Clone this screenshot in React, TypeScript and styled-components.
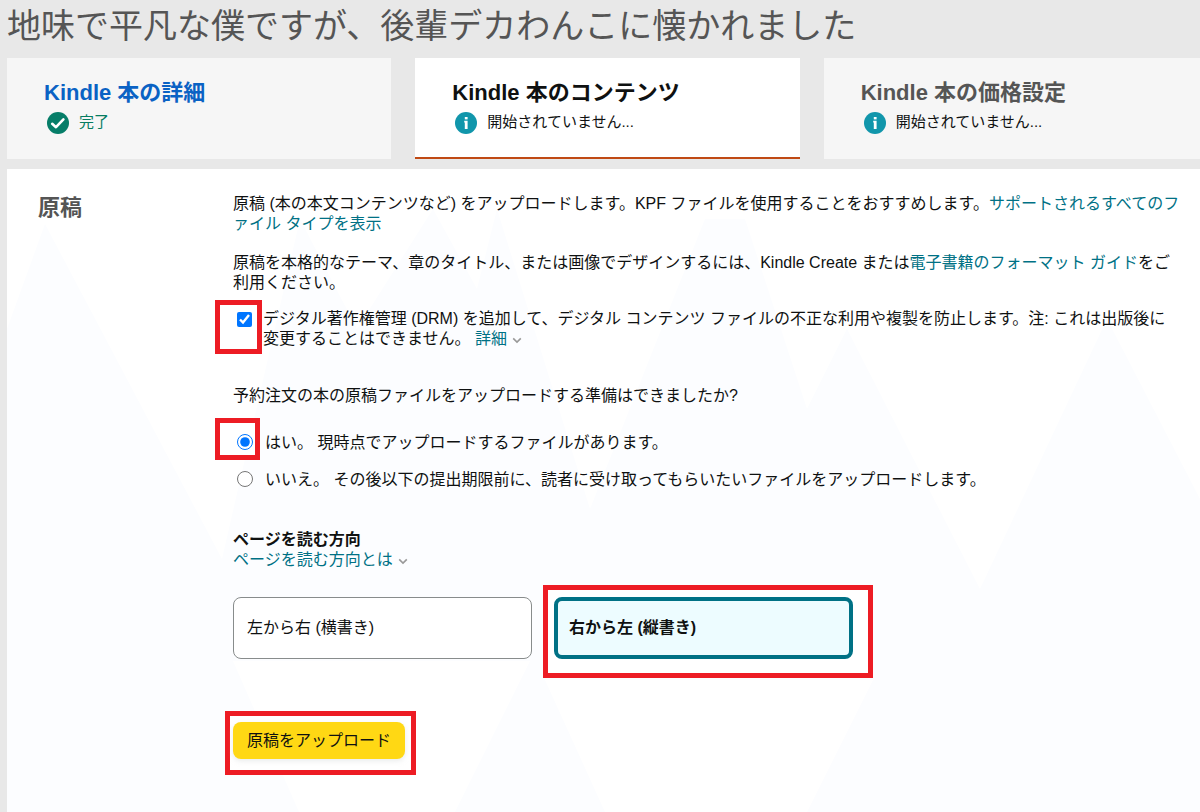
import React, { useState } from "react";
import styled, { createGlobalStyle, css } from "styled-components";

const GlobalStyle = createGlobalStyle`
  *, *::before, *::after { box-sizing: border-box; }
  body {
    margin: 0;
    background: #e8e8e8;
    color: #0f1111;
    font-family: "Liberation Sans", "Noto Sans CJK JP", sans-serif;
    font-size: 16px;
    line-height: 20px;
  }
  button, input { font: inherit; color: inherit; }
`;

const Page = styled.div`
  display: flex;
  flex-direction: column;
  min-height: 100vh;
  padding-left: 7px;
  overflow: hidden;
`;

const BookTitle = styled.h1`
  margin: 0;
  padding-bottom: 6px;
  font-size: 34px;
  font-weight: 400;
  line-height: 52px;
  color: #555;
`;

const Steps = styled.nav`
  display: grid;
  grid-template-columns: repeat(3, 1fr);
  gap: 24px;
  margin: 0 -8px 10px 0;
`;

type StepState = "done" | "current" | "next";

const stepColors: Record<StepState, string> = {
  done: "#0a62c4",
  current: "#0f1111",
  next: "#555",
};

const Step = styled.a<{ $state: StepState }>`
  display: flex;
  flex-direction: column;
  gap: 7px;
  min-height: 101px;
  padding: 23px 24px 16px 37px;
  background: ${(p) => (p.$state === "current" ? "#fff" : "#f6f6f6")};
  border-bottom: 2px solid ${(p) => (p.$state === "current" ? "#c04a14" : "#f6f6f6")};
  color: ${(p) => stepColors[p.$state]};
  text-decoration: none;
`;

const StepName = styled.span`
  font-size: 22px;
  font-weight: 700;
  line-height: 24px;
`;

const StepStatus = styled.span<{ $done: boolean }>`
  display: flex;
  align-items: flex-start;
  gap: 10px;
  padding-left: 3px;
  font-size: 15px;
  color: ${(p) => (p.$done ? "#067d62" : "#0f1111")};

  svg { flex: none; }
`;

const Panel = styled.main`
  position: relative;
  flex: 1;
  display: grid;
  grid-template-columns: 195px 1fr;
  padding: 25px 15px 36px 31px;
  background: #fff;
`;

const Peaks = styled.svg`
  position: absolute;
  inset: 0;
  width: 100%;
  height: 100%;
`;

const SectionName = styled.h2`
  position: relative;
  margin: 0;
  font-size: 22px;
  line-height: 28px;
  color: #555;
`;

const Content = styled.div`
  position: relative;
`;

const Paragraph = styled.p`
  margin: 0 0 19px;
  line-break: loose;
`;

const Link = styled.a`
  color: #007185;
  text-decoration: none;
  &:hover { text-decoration: underline; }
`;

const Highlight = styled.span<{ $left: number; $top: number; $width: number; $height: number }>`
  position: absolute;
  left: ${(p) => p.$left}px;
  top: ${(p) => p.$top}px;
  width: ${(p) => p.$width}px;
  height: ${(p) => p.$height}px;
  border: 5px solid #ed1c24;
  background: #fff;
  pointer-events: none;
`;

const ChoiceRow = styled.div<{ $gap: number }>`
  position: relative;
  display: flex;
  align-items: flex-start;
  gap: ${(p) => p.$gap}px;
  padding-left: 4px;
`;

const DrmRow = styled(ChoiceRow)`
  margin: -3px 0 37px;
  padding-right: 8px;
`;

const Checkbox = styled.input`
  position: relative;
  flex: none;
  width: 15px;
  height: 15px;
  margin: 3px 0 0;
`;

const Radio = styled.input`
  position: relative;
  flex: none;
  width: 16px;
  height: 16px;
  margin: 1px 0;
`;

const ChoiceLabel = styled.label`
  position: relative;
`;

const Fieldset = styled.fieldset`
  display: flex;
  flex-direction: column;
  gap: 17px;
  min-width: 0;
  margin: 0 0 40px;
  padding: 0;
  border: 0;
`;

const Legend = styled.legend`
  margin-bottom: 27px;
  padding: 0;
`;

const SubHeading = styled.h3`
  margin: 0;
  font-size: 16px;
  line-height: 20px;
`;

const Directions = styled.div`
  display: flex;
  gap: 22px;
  margin: 27px 0 63px;
`;

const Anchor = styled.div`
  position: relative;
  width: 299px;
`;

const Direction = styled.button<{ $selected: boolean }>`
  position: relative;
  display: block;
  width: 100%;
  height: 62px;
  border-radius: 8px;
  text-align: left;
  cursor: pointer;
  ${(p) =>
    p.$selected
      ? css`
          padding: 0 11px;
          border: 4px solid #007185;
          background: #edfcff;
          font-weight: 700;
        `
      : css`
          padding: 0 13px;
          border: 1px solid #888c8c;
          background: #fff;
        `}
`;

const UploadArea = styled.div`
  position: relative;
`;

const UploadButton = styled.button`
  position: relative;
  height: 37px;
  padding: 0 14px;
  border: 0;
  border-radius: 8px;
  background: #ffd814;
  box-shadow: 0 2px 5px rgba(213, 217, 217, 0.5);
  cursor: pointer;
`;

const ChevronIcon = styled.svg`
  margin-left: 5px;
`;

function Chevron() {
  return (
    <ChevronIcon width="10" height="7" viewBox="0 0 10 7" aria-hidden="true">
      <path d="M1.2 1.4 5 5.1 8.8 1.4" fill="none" stroke="#999" strokeWidth="1.6" />
    </ChevronIcon>
  );
}

function CheckBadge() {
  return (
    <svg width="22" height="22" viewBox="0 0 22 22" aria-hidden="true">
      <circle cx="11" cy="11" r="11" fill="#067d68" />
      <path d="M5.2 11.8 9 15.2 16.4 7.4" fill="none" stroke="#fff" strokeWidth="2.6" strokeLinecap="round" strokeLinejoin="round" />
    </svg>
  );
}

function InfoBadge() {
  return (
    <svg width="22" height="22" viewBox="0 0 22 22" aria-hidden="true">
      <circle cx="11" cy="11" r="11" fill="#1196ab" />
      <rect x="9.8" y="5" width="2.8" height="2.4" fill="#fff" />
      <path d="M9.2 8.8h3.4v8.2H9.8v-6.4h-.6z" fill="#fff" />
    </svg>
  );
}

const steps: { name: string; status: string; state: StepState }[] = [
  { name: "Kindle 本の詳細", status: "完了", state: "done" },
  { name: "Kindle 本のコンテンツ", status: "開始されていません...", state: "current" },
  { name: "Kindle 本の価格設定", status: "開始されていません...", state: "next" },
];

export default function App() {
  const [drm, setDrm] = useState(true);
  const [ready, setReady] = useState("yes");
  const [direction, setDirection] = useState("rtl");

  return (
    <>
      <GlobalStyle />
      <Page lang="ja">
        <BookTitle>地味で平凡な僕ですが、後輩デカわんこに懐かれました</BookTitle>

        <Steps>
          {steps.map((step) => (
            <Step key={step.name} href="#" $state={step.state}>
              <StepName>{step.name}</StepName>
              <StepStatus $done={step.state === "done"}>
                {step.state === "done" ? <CheckBadge /> : <InfoBadge />}
                {step.status}
              </StepStatus>
            </Step>
          ))}
        </Steps>

        <Panel>
          <Peaks viewBox="0 0 1193 643" preserveAspectRatio="none" aria-hidden="true">
            <path
              d="M0 160 38 55 215 390 293 50 350 160 426 40 470 120 490 40 583 340 698 50 738 50 800 240 840 160 973 420 1100 150 1193 330V643H0z"
              fill="#fcfdff"
            />
            <path d="M226 492H523L448 643H292zM538 511H866L800 643H598z" fill="#fff" />
          </Peaks>

          <SectionName>原稿</SectionName>

          <Content>
            <Paragraph>
              原稿 (本の本文コンテンツなど) をアップロードします。KPF ファイルを使用することをおすすめします。
              <Link href="#">サポートされるすべてのファイル タイプを表示</Link>
            </Paragraph>
            <Paragraph>
              原稿を本格的なテーマ、章のタイトル、または画像でデザインするには、Kindle Create または
              <Link href="#">電子書籍のフォーマット ガイド</Link>をご利用ください。
            </Paragraph>

            <DrmRow $gap={11}>
              <Highlight $left={-18} $top={-9} $width={47} $height={54} />
              <Checkbox id="drm" type="checkbox" checked={drm} onChange={(e) => setDrm(e.target.checked)} />
              <ChoiceLabel htmlFor="drm">
                デジタル著作権管理 (DRM) を追加して、デジタル コンテンツ ファイルの不正な利用や複製を防止します。注: これは出版後に変更することはできません。{" "}
                <Link href="#">
                  詳細
                  <Chevron />
                </Link>
              </ChoiceLabel>
            </DrmRow>

            <Fieldset>
              <Legend>予約注文の本の原稿ファイルをアップロードする準備はできましたか?</Legend>
              <ChoiceRow $gap={12}>
                <Highlight $left={-18} $top={-15} $width={45} $height={42} />
                <Radio id="yes" type="radio" name="ready" checked={ready === "yes"} onChange={() => setReady("yes")} />
                <ChoiceLabel htmlFor="yes">はい。 現時点でアップロードするファイルがあります。</ChoiceLabel>
              </ChoiceRow>
              <ChoiceRow $gap={12}>
                <Radio id="no" type="radio" name="ready" checked={ready === "no"} onChange={() => setReady("no")} />
                <ChoiceLabel htmlFor="no">
                  いいえ。 その後以下の提出期限前に、読者に受け取ってもらいたいファイルをアップロードします。
                </ChoiceLabel>
              </ChoiceRow>
            </Fieldset>

            <SubHeading>ページを読む方向</SubHeading>
            <Link href="#">
              ページを読む方向とは
              <Chevron />
            </Link>

            <Directions>
              <Anchor>
                <Direction
                  type="button"
                  aria-pressed={direction === "ltr"}
                  $selected={direction === "ltr"}
                  onClick={() => setDirection("ltr")}
                >
                  左から右 (横書き)
                </Direction>
              </Anchor>
              <Anchor>
                <Highlight $left={-11} $top={-12} $width={330} $height={93} />
                <Direction
                  type="button"
                  aria-pressed={direction === "rtl"}
                  $selected={direction === "rtl"}
                  onClick={() => setDirection("rtl")}
                >
                  右から左 (縦書き)
                </Direction>
              </Anchor>
            </Directions>

            <UploadArea>
              <Highlight $left={-8} $top={-11} $width={191} $height={64} />
              <UploadButton type="button">原稿をアップロード</UploadButton>
            </UploadArea>
          </Content>
        </Panel>
      </Page>
    </>
  );
}
